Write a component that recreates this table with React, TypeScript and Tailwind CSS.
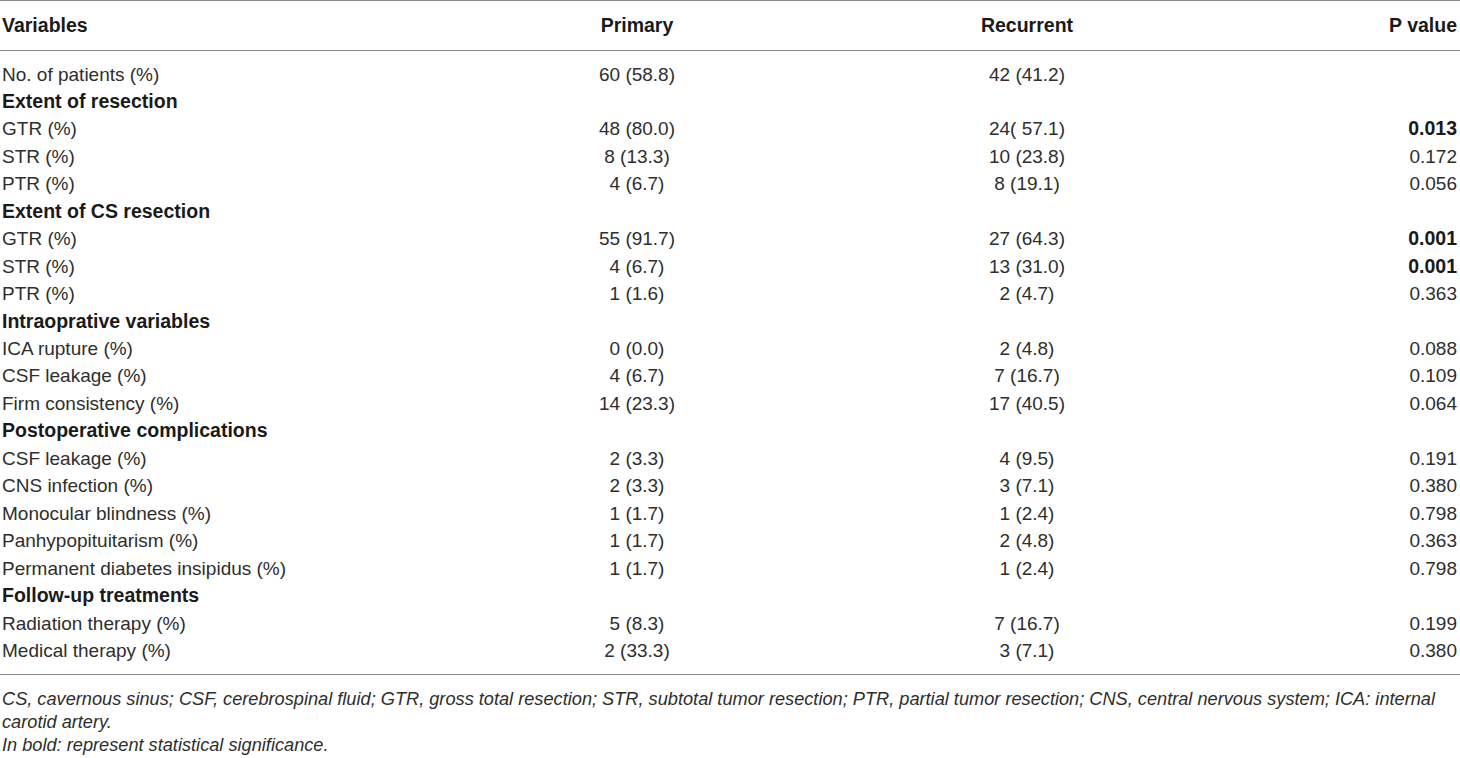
import React from 'react';

type Row = { label: string; primary?: string; recurrent?: string; p?: string; bold?: boolean; section?: boolean };

const rows: Row[] = [
  { label: 'No. of patients (%)', primary: '60 (58.8)', recurrent: '42 (41.2)' },
  { label: 'Extent of resection', section: true },
  { label: 'GTR (%)', primary: '48 (80.0)', recurrent: '24( 57.1)', p: '0.013', bold: true },
  { label: 'STR (%)', primary: '8 (13.3)', recurrent: '10 (23.8)', p: '0.172' },
  { label: 'PTR (%)', primary: '4 (6.7)', recurrent: '8 (19.1)', p: '0.056' },
  { label: 'Extent of CS resection', section: true },
  { label: 'GTR (%)', primary: '55 (91.7)', recurrent: '27 (64.3)', p: '0.001', bold: true },
  { label: 'STR (%)', primary: '4 (6.7)', recurrent: '13 (31.0)', p: '0.001', bold: true },
  { label: 'PTR (%)', primary: '1 (1.6)', recurrent: '2 (4.7)', p: '0.363' },
  { label: 'Intraoprative variables', section: true },
  { label: 'ICA rupture (%)', primary: '0 (0.0)', recurrent: '2 (4.8)', p: '0.088' },
  { label: 'CSF leakage (%)', primary: '4 (6.7)', recurrent: '7 (16.7)', p: '0.109' },
  { label: 'Firm consistency (%)', primary: '14 (23.3)', recurrent: '17 (40.5)', p: '0.064' },
  { label: 'Postoperative complications', section: true },
  { label: 'CSF leakage (%)', primary: '2 (3.3)', recurrent: '4 (9.5)', p: '0.191' },
  { label: 'CNS infection (%)', primary: '2 (3.3)', recurrent: '3 (7.1)', p: '0.380' },
  { label: 'Monocular blindness (%)', primary: '1 (1.7)', recurrent: '1 (2.4)', p: '0.798' },
  { label: 'Panhypopituitarism (%)', primary: '1 (1.7)', recurrent: '2 (4.8)', p: '0.363' },
  { label: 'Permanent diabetes insipidus (%)', primary: '1 (1.7)', recurrent: '1 (2.4)', p: '0.798' },
  { label: 'Follow-up treatments', section: true },
  { label: 'Radiation therapy (%)', primary: '5 (8.3)', recurrent: '7 (16.7)', p: '0.199' },
  { label: 'Medical therapy (%)', primary: '2 (33.3)', recurrent: '3 (7.1)', p: '0.380' },
];

export default function App() {
  return (
    <div className="w-[1460px] bg-white text-[19px] leading-[27.45px] text-[#2e2e2e] font-['Liberation_Sans',Arial,sans-serif]">
      <table className="w-full table-fixed border-collapse">
        <colgroup>
          <col className="w-[440px]" />
          <col className="w-[394px]" />
          <col className="w-[386px]" />
          <col className="w-[240px]" />
        </colgroup>
        <thead>
          <tr className="h-[50px] border-y border-[#8c8c8c] text-[19.5px] font-bold text-[#1a1a1a]">
            <th className="pl-[2px] text-left">Variables</th>
            <th className="text-center">Primary</th>
            <th className="text-center">Recurrent</th>
            <th className="pr-[3px] text-right">P value</th>
          </tr>
        </thead>
        <tbody className="border-b border-[#8c8c8c]">
          <tr className="h-[10px]"><td colSpan={4} /></tr>
          {rows.map((row, i) => (
            <tr key={i} className="h-[27.45px]">
              <td className={`whitespace-nowrap pl-[2px] ${row.section ? 'text-[19.5px] font-bold text-[#1a1a1a]' : ''}`}>{row.label}</td>
              <td className="text-center">{row.primary}</td>
              <td className="text-center">{row.recurrent}</td>
              <td className={`pr-[3px] text-right ${row.bold ? 'text-[19.5px] font-bold text-[#1a1a1a]' : ''}`}>{row.p}</td>
            </tr>
          ))}
          <tr className="h-[10px]"><td colSpan={4} /></tr>
        </tbody>
      </table>
      <div className="pl-[2px] pt-[13px] text-[18.2px] italic leading-[23px]">
        <p>
          CS, cavernous sinus; CSF, cerebrospinal fluid; GTR, gross total resection; STR, subtotal tumor resection; PTR, partial tumor resection; CNS, central nervous system; ICA: internal carotid artery.
        </p>
        <p>In bold: represent statistical significance.</p>
      </div>
    </div>
  );
}
